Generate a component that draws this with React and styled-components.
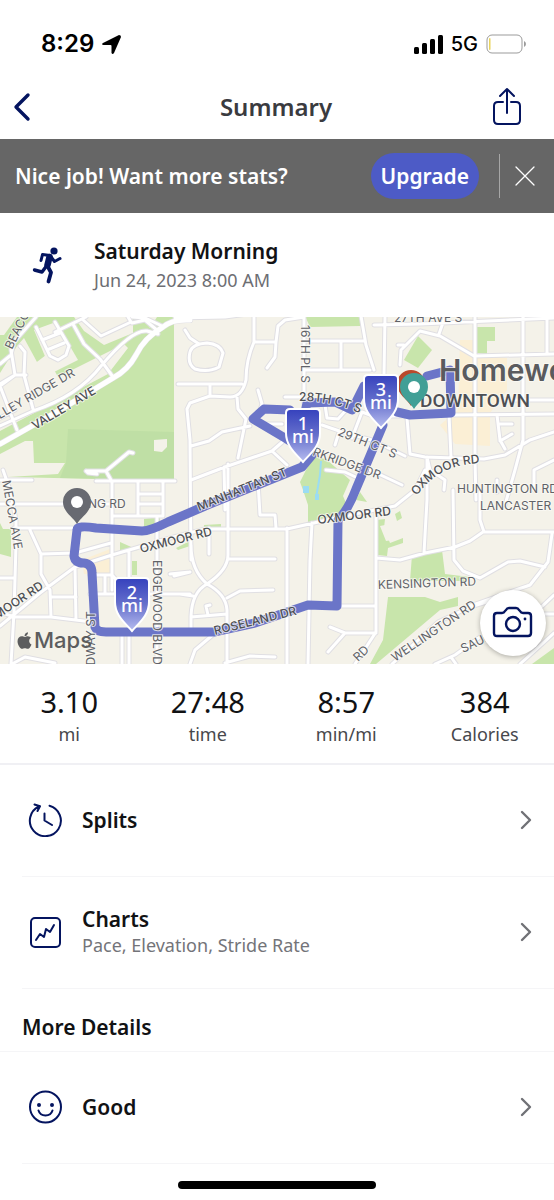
import styled, { createGlobalStyle } from "styled-components";
import { FaApple } from "react-icons/fa";

const GlobalStyle = createGlobalStyle`
  * {
    box-sizing: border-box;
  }

  body {
    margin: 0;
    background: #fff;
    color: #111214;
    font-family: "Noto Sans", sans-serif;
  }
`;

const Screen = styled.div`
  width: 100%;
`;

const StatusBar = styled.div`
  display: flex;
  align-items: center;
  justify-content: space-between;
  height: 74px;
  padding: 14px 27px 0 41px;
  color: #000;
  font-family: Inter, sans-serif;
`;

const StatusGroup = styled.div`
  display: flex;
  align-items: center;
  gap: 8px;
`;

const Clock = styled.span`
  font-size: 24px;
  font-weight: 600;
  line-height: 28px;
`;

const Network = styled.span`
  font-size: 20px;
  font-weight: 500;
  line-height: 28px;
`;

const Header = styled.header`
  display: grid;
  grid-template-columns: 48px 1fr 48px;
  align-items: center;
  height: 65px;
  padding: 0 14px 0 12px;
`;

const Title = styled.h1`
  margin: 0;
  color: #3a3b3f;
  font-size: 24px;
  font-weight: 600;
  line-height: 32px;
  text-align: center;
`;

const IconButton = styled.button`
  display: flex;
  align-items: center;
  justify-content: ${({ $align }) => $align || "center"};
  min-height: 44px;
  padding: 0;
  border: 0;
  background: none;
  color: ${({ $color }) => $color || "#04145f"};
  cursor: pointer;
`;

const Banner = styled.section`
  display: flex;
  align-items: center;
  height: 74px;
  padding: 0 18px 0 15px;
  background: #666;
  color: #fff;
`;

const BannerText = styled.p`
  flex: 1;
  margin: 0;
  font-size: 21px;
  font-weight: 600;
  line-height: 28px;
`;

const UpgradeButton = styled.button`
  height: 46px;
  padding: 0 10px;
  border: 0;
  border-radius: 23px;
  background: #4d5bc6;
  color: #fff;
  font: 600 21px / 28px "Noto Sans", sans-serif;
  cursor: pointer;
`;

const BannerDivider = styled.div`
  width: 1px;
  height: 44px;
  margin: 0 14px 0 20px;
  background: #a6a6a6;
`;

const Activity = styled.section`
  display: flex;
  align-items: center;
  gap: 32px;
  height: 104px;
  padding: 2px 32px 0;
`;

const ActivityName = styled.h2`
  margin: 0;
  font-size: 21px;
  font-weight: 600;
  line-height: 29px;
`;

const ActivityDate = styled.p`
  margin: 0;
  color: #6d6e73;
  font-size: 18px;
  line-height: 29px;
`;

const MapArea = styled.section`
  position: relative;
`;

const MapDrawing = styled.svg`
  display: block;
  width: 100%;
  height: auto;
  background: #f4f2e9;
`;

const MapLabel = styled.text`
  fill: ${({ $strong }) => ($strong ? "#4d4f54" : "#606268")};
  stroke: rgba(251, 250, 245, 0.75);
  stroke-width: 2px;
  stroke-linejoin: round;
  paint-order: stroke;
  font-family: ${({ $font }) => $font || "Inter"}, sans-serif;
  font-size: ${({ $size }) => $size || 12}px;
  font-weight: ${({ $strong }) => ($strong ? 500 : 400)};
`;

const CityLabel = styled(MapLabel)`
  fill: #5a5b5e;
  font-weight: 600;
`;

const MarkerText = styled.text`
  fill: #fff;
  font-family: "Noto Sans", sans-serif;
  font-size: 18px;
  font-weight: 500;
  text-anchor: middle;
`;

const MapCredit = styled.div`
  position: absolute;
  bottom: 10px;
  left: 15px;
  display: flex;
  align-items: center;
  color: #5c5d5e;
  font: 500 22px / 28px Inter, sans-serif;
`;

const CameraButton = styled.button`
  position: absolute;
  right: 8px;
  bottom: 8px;
  display: flex;
  align-items: center;
  justify-content: center;
  width: 66px;
  height: 66px;
  padding: 0;
  border: 0;
  border-radius: 50%;
  background: #fff;
  box-shadow: 0 1px 5px rgba(0, 0, 0, 0.3);
  color: #04145f;
  cursor: pointer;
`;

const Stats = styled.dl`
  display: grid;
  grid-template-columns: repeat(4, 1fr);
  height: 101px;
  margin: 0;
  padding-top: 18px;
  border-bottom: 2px solid #f0f0f4;
  text-align: center;
`;

const Stat = styled.div`
  display: flex;
  flex-direction: column-reverse;
  justify-content: flex-end;
`;

const StatValue = styled.dd`
  margin: 0;
  font-size: 29px;
  line-height: 40px;
`;

const StatLabel = styled.dt`
  color: #47484c;
  font-size: 18px;
  line-height: 24px;
`;

const RowLink = styled.a`
  display: flex;
  align-items: center;
  height: 112px;
  margin-left: 22px;
  padding: 0 22px 2px 6px;
  border-bottom: 1px solid #f5f5f7;
  color: inherit;
  text-decoration: none;
`;

const RowText = styled.div`
  flex: 1;
  margin-left: 20px;
`;

const RowTitle = styled.div`
  font-size: 21px;
  font-weight: 600;
  line-height: 28px;
`;

const RowDetail = styled.div`
  padding-bottom: 2px;
  color: #737479;
  font-size: 18px;
  line-height: 24px;
`;

const SectionTitle = styled.h2`
  height: 63px;
  margin: 0;
  padding: 24px 22px 0;
  border-bottom: 1px solid #f5f5f7;
  font-size: 21px;
  font-weight: 600;
  line-height: 28px;
`;

const HomeIndicator = styled.div`
  width: 198px;
  height: 8px;
  margin: 17px auto 12px;
  border-radius: 4px;
  background: #000;
`;

const LineIcon = styled.svg`
  flex: none;
  fill: none;
  stroke: currentColor;
  stroke-width: ${({ $weight }) => $weight || 2};
  stroke-linecap: round;
  stroke-linejoin: round;
`;

const NavyIcon = styled(LineIcon)`
  color: #04145f;
`;

const ChevronIcon = styled(LineIcon)`
  color: #707176;
`;

const parks = [
  "0,317 174,317 174,480 100,479 8,477 58,474 65,463 34,463 33,441 25,441 0,454",
  "305,316 360,316 360,326 310,327",
  "418,336 432,350 418,368 404,360",
  "477,327 495,327 495,341 487,341 487,354 477,353",
  "315,455 327,460 350,480 343,496 352,517 340,520 308,523 308,505 303,490 300,482 306,470",
  "144,519 160,517 160,531 144,534",
  "120,542 138,550 120,552",
  "132,561 137,561 137,575 132,575",
  "0,523 3,529 11,529 11,557 0,554",
  "360,492 367,502 356,500",
  "412,555 442,550 445,574 470,577 465,581 410,581",
  "388,597 425,597 440,602 458,597 458,606 440,610 376,664 370,664 383,640",
  "376,520 385,519 384,528 390,543 403,538 403,543 388,548 387,556 378,555",
  "395,514 400,511 402,518 397,521",
  "532,664 554,648 554,664",
  "176,548 190,541 190,546 178,550",
  "204,525 221,524 221,528 204,529",
];

// Built-up blocks that sit on top of the parks
const blocks = [
  "34,330 56,322 78,360 52,373",
  "74,317 133,317 133,333 104,345 84,331",
  "0,390 46,355 58,377 124,344 128,348 108,374 0,431",
  "17,346 24,338 37,362 38,392 0,411 0,373",
  "154,440 167,439 167,447 162,452 154,451",
  "142,317 157,317 150,328",
  "0,317 17,317 4,335 0,335",
  "380,526 390,524 393,540 386,541",
];

const roads = [
  // north-west
  "M0,418 L15,410",
  "M0,364 L11,355 L14,342 L36,317",
  "M11,350 L15,375 L0,386",
  "M20,346 L25,352 L24,375 L33,409",
  "M0,384 L15,375 L26,375",
  "M0,386 L17,430",
  "M36,327 L50,356 L58,360 L66,355 L69,346 L55,322",
  "M42,340 L60,333 M47,350 L64,343",
  "M55,332 L86,317",
  "M73,324 L84,344 L100,359 L113,377",
  "M82,319 L101,336 L131,322 L128,317",
  "M0,426 L33,411 Q78,396 101,366 Q132,329 147,331 L158,334",
  "M158,331 L145,320 L132,323",
  "M132,317 L145,318 L162,326",
  // west
  "M86,471 L106,471 L129,452 L133,453 M86,471 L88,473 L97,474 M106,471 L111,480",
  "M0,480 L32,480 M96,481 L175,481",
  "M112,481 V590 M138,481 V516 M163,481 V516",
  "M138,494 H163 M138,504 H163 M112,516 H163",
  "M0,504 H112",
  "M3,470 L10,490 L16,520 L16,545 L14,612 L11,664",
  "M14,528 H75",
  "M30,530 L41,554 L41,574 L50,590 L51,617",
  "M41,554 L75,553 L111,543",
  "M0,578 H14 M0,612 L14,617 L51,617 L92,622",
  "M51,597 H76 M75,568 L76,620",
  "M90,575 L112,575 L121,585 V594 M90,594 H190 M105,577 V594",
  "M129,550 V590 M129,632 V664 M122,632 V664 M157,516 V664",
  "M174,576 L190,572",
  "M12,664 L25,657 L55,663",
  // centre
  "M175,318 L225,317 L255,313",
  "M254,317 L254,342 Q246,360 246,380 Q242,397 230,397 L210,396 L190,403 L187,409 L190,440 L191,560",
  "M185,330 L190,338 L199,344",
  "M190,352 Q192,344 207,343 Q220,344 223,353 L219,367 Q208,373 195,369 Q187,364 190,352",
  "M254,342 H276 L278,326 L285,320 L304,317",
  "M276,342 L275,357 L267,368",
  "M178,384 H242 M210,386 L210,396",
  "M237,397 L238,409 L246,419 L238,458",
  "M258,390 L262,404 L259,413",
  "M191,446 L209,441 L222,432 L250,426",
  "M191,480 L225,467 L272,451 L287,438",
  "M224,467 L225,510 M272,451 L287,465",
  "M264,424 H282",
  "M304,317 V408 M285,397 H304",
  "M304,341 H365 M341,342 V370 M304,370 H370",
  "M361,316 L366,345 L374,370",
  "M325,405 L327,418 L338,419 L347,409",
  "M322,425 L345,433 L372,440 L405,456",
  "M339,432 L335,445 M352,438 L362,412 L370,415",
  "M326,470 L345,472 L362,480",
  // east
  "M385,317 L384,375",
  "M374,325 L420,324 L554,318",
  "M398,345 H404 M400,365 L401,350 L420,331 L440,336 L474,356 L554,354",
  "M439,334 L445,317",
  "M475,317 V460 L476,500",
  "M523,317 V440 L515,470 L505,505 M547,317 V354",
  "M390,416 L450,415 L554,414",
  "M503,400 H554",
  "M407,418 L410,454 L425,457 L484,459 L505,455 L530,440 L554,432",
  "M427,457 L430,470 L445,480 L444,490 M427,457 L427,500 L424,553",
  "M449,415 L451,457",
  "M497,415 L500,440 L505,449 M500,424 H512 M500,441 L512,434",
  "M370,470 L402,485",
  "M534,490 L534,470 L554,460 M497,480 L497,492",
  // south
  "M191,545 Q191,570 207,584 Q228,570 228,555 V464",
  "M207,584 Q192,592 191,616 V632 M207,584 Q226,594 227,610 V664",
  "M170,574 L190,572 M180,594 L193,596",
  "M228,559 H275 M227,598 L240,591 L273,590",
  "M191,617 L227,614 M208,615 L206,606 L210,605",
  "M209,528 V554",
  "M258,482 L260,515 H275 L276,528",
  "M287,528 V664 M312,523 L310,560 L308,664",
  "M190,664 L195,650 L215,633 M225,663 L250,656 L275,657",
  "M340,606 H375 M330,627 L345,633 H376 M345,633 L328,652",
  "M0,626 L40,593 L75,567 L112,555 L170,538 L205,529 L287,529 L345,516 L395,506 L415,490 L425,470",
  "M376,512 V632 L355,664",
  "M376,558 L400,560 L425,553 L455,547 L470,541 L483,532 H554",
  "M480,492 L480,520 L484,532",
  "M453,490 L454,560 L463,571 L480,578 L508,562 L520,561 L545,567",
  "M552,534 L548,562 L530,585 L470,606",
  "M392,664 L438,622 L470,607 L500,598",
  "M554,595 L535,613 M525,614 H554",
  "M435,664 L455,655 L480,637 M451,657 L456,664 M520,664 L554,633",
];

const valleyAve =
  "M0,444 L60,410 L113,378 Q128,370 136,355 Q144,338 163,327 Q172,319 190,320";

const districts = [
  "82,560 110,549 110,570 116,576 84,574",
  "460,340 478,340 478,354 507,358 507,390 490,413 490,446 455,444 440,425 458,410",
];

const routes = [
  "M142,531 L96,528 Q77,525 77,530 L74,556 Q75,563 84,563 Q92,564 92,573 L95,627 Q97,632 106,632 L214,632 L255,623 L308,605 L337,606 L338,520 Q348,510 356,489 L383,425",
  "M142,531 Q150,531 168,522 L205,506 L302,467 L312,455 L285,438 L253,419 L264,409 L290,410",
  "M305,413 L307,403 L335,402 L352,410 L364,386",
  "M397,412 L410,415 L451,413 L450,370 L427,376",
];

const labels = [
  { text: "BEACON", x: 12, y: 350, rotate: -64 },
  { text: "VALLEY RIDGE DR", x: -14, y: 427, rotate: -30 },
  { text: "VALLEY AVE", x: 35, y: 430, rotate: -31, strong: true },
  { text: "MECCA AVE", x: 2, y: 481, rotate: 80 },
  { text: "NG RD", x: 88, y: 508 },
  { text: "OXMOOR RD", x: 141, y: 553, rotate: -14, strong: true },
  { text: "OXMOOR RD", x: -17, y: 629, rotate: -34, strong: true },
  { text: "MANHATTAN ST", x: 199, y: 511, rotate: -22, strong: true },
  { text: "16TH PL S", x: 301, y: 325, rotate: 90 },
  { text: "27TH AVE S", x: 394, y: 322 },
  { text: "29TH CT S", x: 337, y: 435, rotate: 22 },
  { text: "RKRIDGE DR", x: 312, y: 455, rotate: 20 },
  { text: "OXMOOR RD", x: 318, y: 524, rotate: -7, strong: true },
  { text: "HUNTINGTON RD", x: 457, y: 493 },
  { text: "LANCASTER", x: 480, y: 510 },
  { text: "ROSELAND DR", x: 215, y: 635, rotate: -14, strong: true },
  { text: "EDGEWOOD BLVD", x: 153, y: 560, rotate: 90 },
  { text: "WELLINGTON RD", x: 395, y: 662, rotate: -34 },
  { text: "SAULTER", x: 463, y: 653, rotate: -25 },
  { text: "KENSINGTON RD", x: 378, y: 589, rotate: -2 },
  { text: "RD", x: 358, y: 662, rotate: -44 },
  { text: "BROADWAY ST", x: 95, y: 698, rotate: -90 },
];

const stats = [
  { value: "3.10", label: "mi" },
  { value: "27:48", label: "time" },
  { value: "8:57", label: "min/mi" },
  { value: "384", label: "Calories" },
];

function Chevron() {
  return (
    <ChevronIcon width="12" height="22" viewBox="0 0 12 22" $weight={2.4} aria-hidden="true">
      <path d="M2 3 10 11 2 19" />
    </ChevronIcon>
  );
}

function MileMarker({ x, y, mile }) {
  return (
    <g transform={`translate(${x} ${y})`}>
      <path
        d="M-13,0 H13 Q17,0 17,4 V24 C17,37 8,44 0,53 C-8,44 -17,37 -17,24 V4 Q-17,0 -13,0 Z"
        fill="url(#marker)"
        stroke="#fff"
        strokeWidth="2"
      />
      <MarkerText y="21">{mile}</MarkerText>
      <MarkerText y="34">mi</MarkerText>
    </g>
  );
}

function Pin({ x, y, color, hollow }) {
  return (
    <g transform={`translate(${x} ${y})`}>
      <path d="M0,22 C-4,15 -14,10 -14,0 A14,14 0 0 1 14,0 C14,10 4,15 0,22 Z" fill={color} />
      {hollow && <circle r="6" fill="#fff" />}
    </g>
  );
}

function RouteMap() {
  return (
    <MapArea aria-label="Route map">
      <MapDrawing viewBox="0 317 554 347">
        <defs>
          <linearGradient id="marker" x1="0" y1="0" x2="0" y2="1">
            <stop offset="0" stopColor="#3541bd" />
            <stop offset="0.5" stopColor="#6670cc" />
            <stop offset="1" stopColor="#b7bdf0" />
          </linearGradient>
          <path id="oxmoor-east" d="M417,496 Q438,464 482,463" />
          <path id="twenty-eighth" d="M299,401 Q334,400 370,418" />
        </defs>
        <g fill="#fbefd5">
          {districts.map((points) => (
            <polygon key={points} points={points} />
          ))}
        </g>
        <g fill="#c8e5ab">
          {parks.map((points) => (
            <polygon key={points} points={points} />
          ))}
        </g>
        <polygon points="68,429 174,432 174,480 60,478 66,463" fill="#bfdfa5" />
        <g fill="#f4f2e9">
          {blocks.map((points) => (
            <polygon key={points} points={points} />
          ))}
        </g>
        <g fill="#9bdcf3">
          <rect x="303" y="486" width="6" height="7" />
          <rect x="315" y="494" width="4" height="6" />
        </g>
        <path d="M321,461 L320,475 L316,498" fill="none" stroke="#9bdcf3" strokeWidth="2" />
        <g fill="none" strokeLinecap="round" strokeLinejoin="round">
          <path d={roads.join(" ")} stroke="#e0dfe3" strokeWidth="5" />
          <path d={valleyAve} stroke="#e0dfe3" strokeWidth="6" />
          <path d={roads.join(" ")} stroke="#fff" strokeWidth="3" />
          <path d={valleyAve} stroke="#fff" strokeWidth="5" />
          <path d={routes.join(" ")} stroke="#6b75c8" strokeWidth="9" />
        </g>
        {labels.map(({ text, x, y, rotate = 0, strong }) => (
          <MapLabel
            key={`${text}-${x}`}
            $strong={strong}
            transform={`translate(${x} ${y}) rotate(${rotate})`}
          >
            {text}
          </MapLabel>
        ))}
        <MapLabel $strong>
          <textPath href="#oxmoor-east">OXMOOR RD</textPath>
        </MapLabel>
        <MapLabel $strong>
          <textPath href="#twenty-eighth">28TH CT S</textPath>
        </MapLabel>
        <CityLabel x="439" y="381" $size={30}>
          Homewood
        </CityLabel>
        <MapLabel x="420" y="407" $size={19} $font="Roboto" $strong>
          DOWNTOWN
        </MapLabel>
        <Pin x={411} y={384} color="#b9492c" />
        <Pin x={414} y={387} color="#419f96" hollow />
        <Pin x={77} y={502} color="#686a71" hollow />
        <MileMarker x={303} y={409} mile="1" />
        <MileMarker x={132} y={578} mile="2" />
        <MileMarker x={381} y={375} mile="3" />
      </MapDrawing>
      <MapCredit>
        <FaApple size={19} aria-hidden="true" />
        Maps
      </MapCredit>
      <CameraButton type="button" aria-label="Add photo">
        <LineIcon width="42" height="34" viewBox="0 0 42 34" $weight={2.4}>
          <path d="M5 7H10Q12 7 13 5L14 4Q15 2 17 2H24Q26 2 27 4L28 5Q29 7 31 7H36Q39 7 39 10V27Q39 30 36 30H5Q2 30 2 27V10Q2 7 5 7Z" />
          <circle cx="21" cy="18" r="7" />
          <circle cx="33" cy="13" r="1.4" fill="currentColor" stroke="none" />
        </LineIcon>
      </CameraButton>
    </MapArea>
  );
}

function Row({ icon, title, detail }) {
  return (
    <RowLink href="#">
      {icon}
      <RowText>
        <RowTitle>{title}</RowTitle>
        {detail && <RowDetail>{detail}</RowDetail>}
      </RowText>
      <Chevron />
    </RowLink>
  );
}

const splitsIcon = (
  <NavyIcon width="34" height="34" viewBox="0 0 34 34" aria-hidden="true">
    <path d="M21.5 2.7A15.5 15.5 0 1 1 11 3.5M6.5 1.5 12 3.3 9.5 8M16.5 10.5V17.5L24 22" />
  </NavyIcon>
);

const chartsIcon = (
  <NavyIcon width="34" height="34" viewBox="0 0 34 34" aria-hidden="true">
    <rect x="3" y="3" width="29" height="29" rx="4" />
    <path d="M8 25 12 19 16 22 18 14 22 17 26 10" />
  </NavyIcon>
);

const goodIcon = (
  <NavyIcon width="34" height="34" viewBox="0 0 34 34" aria-hidden="true">
    <circle cx="17.5" cy="17" r="15.5" />
    <path d="M10.5 20.5C12.5 27 22.5 27 24.5 20.5" />
    <circle cx="11" cy="15" r="1" fill="currentColor" />
    <circle cx="24" cy="15" r="1" fill="currentColor" />
  </NavyIcon>
);

function App() {
  return (
    <Screen>
      <GlobalStyle />
      <StatusBar>
        <StatusGroup>
          <Clock>8:29</Clock>
          <svg width="19" height="19" viewBox="0 0 19 19" aria-hidden="true">
            <path d="M17 0Q19 0 19 2L12 18Q10.5 20 9.5 18V11Q9.5 10 8.5 10H1.5Q-1 9.5 1 8Z" />
          </svg>
        </StatusGroup>
        <StatusGroup>
          <svg width="29" height="19" viewBox="0 0 29 19" aria-hidden="true">
            <rect x="0" y="12" width="5" height="7" rx="1.5" />
            <rect x="8" y="8" width="5" height="11" rx="1.5" />
            <rect x="16" y="4" width="5" height="15" rx="1.5" />
            <rect x="24" y="0" width="5" height="19" rx="1.5" />
          </svg>
          <Network>5G</Network>
          <svg width="41" height="20" viewBox="0 0 41 20" fill="none" aria-hidden="true">
            <rect x="1" y="1" width="35" height="18" rx="5" stroke="#9b9b9b" />
            <rect x="3" y="4" width="1.5" height="12" rx="0.7" fill="#ead45c" />
            <path d="M38 7Q40 8 40 10T38 13Z" fill="#9b9b9b" />
          </svg>
        </StatusGroup>
      </StatusBar>
      <Header>
        <IconButton type="button" aria-label="Back" $align="flex-start">
          <LineIcon width="20" height="32" viewBox="0 0 20 32" $weight={3.4}>
            <path d="M16 4 4 16 16 28" />
          </LineIcon>
        </IconButton>
        <Title>Summary</Title>
        <IconButton type="button" aria-label="Share" $align="flex-start">
          <LineIcon width="30" height="40" viewBox="0 0 30 40">
            <path d="M11 15H6Q2 15 2 19V33Q2 37 6 37H24Q28 37 28 33V19Q28 15 24 15H19M15 26V2M8 9 15 2 22 9" />
          </LineIcon>
        </IconButton>
      </Header>
      <Banner>
        <BannerText>Nice job! Want more stats?</BannerText>
        <UpgradeButton type="button">Upgrade</UpgradeButton>
        <BannerDivider />
        <IconButton type="button" aria-label="Dismiss" $color="#fff">
          <LineIcon width="22" height="22" viewBox="0 0 22 22" $weight={1.3}>
            <path d="M2 2 20 20M20 2 2 20" />
          </LineIcon>
        </IconButton>
      </Banner>
      <Activity>
        <NavyIcon width="30" height="38" viewBox="0 0 30 38" aria-hidden="true">
          <circle cx="22" cy="4" r="3.6" fill="currentColor" stroke="none" />
          <path d="M9 13.5 10.5 7.5 18 8.5 22.5 14.5 28 11.5" strokeWidth="3" />
          <path d="M17.5 10 15.5 18" strokeWidth="6.5" />
          <path d="M14.5 19 10 25 2.5 23" strokeWidth="3.4" />
          <path d="M15.5 19 19 25.5 16.5 34.5" strokeWidth="3.8" />
        </NavyIcon>
        <div>
          <ActivityName>Saturday Morning</ActivityName>
          <ActivityDate>Jun 24, 2023 8:00 AM</ActivityDate>
        </div>
      </Activity>
      <RouteMap />
      <Stats>
        {stats.map(({ value, label }) => (
          <Stat key={label}>
            <StatLabel>{label}</StatLabel>
            <StatValue>{value}</StatValue>
          </Stat>
        ))}
      </Stats>
      <Row icon={splitsIcon} title="Splits" />
      <Row icon={chartsIcon} title="Charts" detail="Pace, Elevation, Stride Rate" />
      <SectionTitle>More Details</SectionTitle>
      <Row icon={goodIcon} title="Good" />
      <HomeIndicator />
    </Screen>
  );
}

export default App;
